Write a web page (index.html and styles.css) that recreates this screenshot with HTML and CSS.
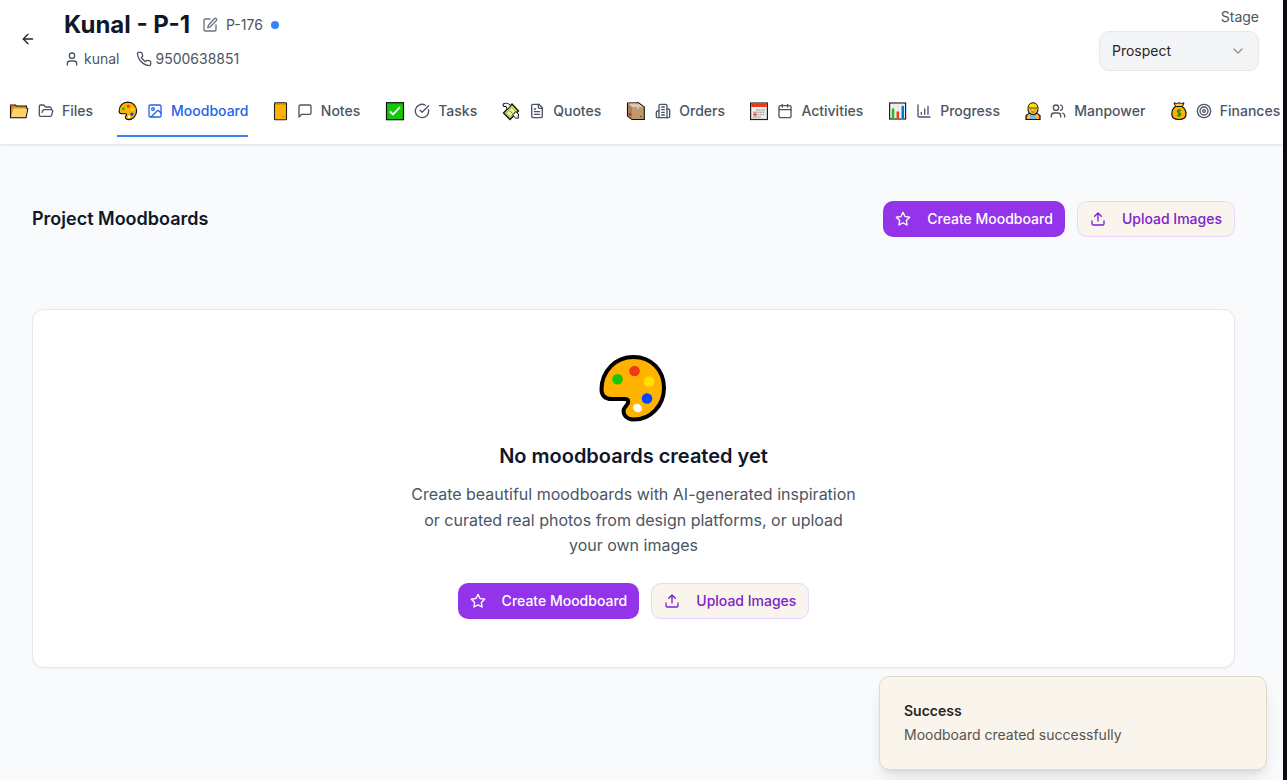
FILE: index.html
```html
<!DOCTYPE html>
<html lang="en">
<head>
<meta charset="utf-8">
<title>Kunal - P-1</title>
<link rel="stylesheet" href="styles.css">
</head>
<body>
<div class="app">
  <header class="header">
    <div class="topbar">
      <svg class="icon back" viewBox="0 0 24 24"><path d="m12 19-7-7 7-7"/><path d="M19 12H5"/></svg>
      <div class="project">
        <div class="title-row">
          <h1>Kunal - P-1</h1>
          <svg class="icon edit" viewBox="0 0 24 24"><path d="M12 3H5a2 2 0 0 0-2 2v14a2 2 0 0 0 2 2h14a2 2 0 0 0 2-2v-7"/><path d="M18.4 2.6a2.1 2.1 0 0 1 3 3L12.4 14.6a2 2 0 0 1-.9.5l-2.9.8.8-2.9a2 2 0 0 1 .5-.9Z"/></svg>
          <span class="code">P-176</span>
          <span class="dot"></span>
        </div>
        <div class="contact">
          <svg class="icon" viewBox="0 0 24 24"><path d="M19 21v-2a4 4 0 0 0-4-4H9a4 4 0 0 0-4 4v2"/><circle cx="12" cy="7" r="4"/></svg>
          <span class="person">kunal</span>
          <svg class="icon" viewBox="0 0 24 24"><path d="M22 16.92v3a2 2 0 0 1-2.18 2 19.79 19.79 0 0 1-8.63-3.07 19.5 19.5 0 0 1-6-6A19.79 19.79 0 0 1 2.12 4.18 2 2 0 0 1 4.11 2h3a2 2 0 0 1 2 1.72c.13.96.36 1.9.7 2.81a2 2 0 0 1-.45 2.11L8.09 9.91a16 16 0 0 0 6 6l1.27-1.27a2 2 0 0 1 2.11-.45c.91.34 1.85.57 2.81.7A2 2 0 0 1 22 16.92z"/></svg>
          <span class="phone">9500638851</span>
        </div>
      </div>
      <div class="stage">
        <span class="stage-label">Stage</span>
        <div class="select"><span>Prospect</span><svg class="icon chevron" viewBox="0 0 24 24"><path d="m6 9 6 6 6-6"/></svg></div>
      </div>
    </div>
    <nav class="tabs">
      <a class="tab tab-files">
        <span class="emoji"><svg width="20" height="20" viewBox="0 0 20 20"><path d="M1.500 4h5l1 1h10v2.500h1.300L17 16.700H1.500z" fill="#d89614" stroke="#111" stroke-width="1.100"/><path d="M4.500 7.500h13.800L16.500 16H2z" fill="#ffd36b"/><path d="M1.500 3.800h4v1.600h-4z" fill="#e5372a"/></svg></span>
        <svg class="icon" viewBox="0 0 24 24"><path d="m6 14 1.500-2.900A2 2 0 0 1 9.240 10H20a2 2 0 0 1 1.940 2.500l-1.540 6a2 2 0 0 1-1.950 1.500H4a2 2 0 0 1-2-2V5a2 2 0 0 1 2-2h3.900a2 2 0 0 1 1.690.9l.81 1.200a2 2 0 0 0 1.670.9H18a2 2 0 0 1 2 2v2"/></svg>
        <span class="name">Files</span>
      </a>
      <a class="tab tab-mood active">
        <span class="emoji"><svg width="20" height="20" viewBox="0 0 72 72"><path d="M35 4C17 4 4 18 4 37c0 7 4 9 10 9h13c5 0 5 4 2 7-6 6-1 14 8 14 17 0 30-14 30-32S53 4 35 4Z" fill="#ffb300" stroke="#111" stroke-width="4"/><circle cx="20" cy="28" r="5.500" fill="#16c60c"/><circle cx="37" cy="19" r="5.500" fill="#f03a17"/><circle cx="52" cy="30" r="5.500" fill="#ffe000"/><circle cx="50" cy="47" r="6" fill="#0046ff"/><circle cx="40" cy="57" r="4.500" fill="#fff"/></svg></span>
        <svg class="icon" viewBox="0 0 24 24"><rect x="3" y="3" width="18" height="18" rx="2"/><circle cx="9" cy="9" r="2"/><path d="m21 15-3.090-3.090a2 2 0 0 0-2.820 0L6 21"/></svg>
        <span class="name">Moodboard</span>
      </a>
      <a class="tab tab-notes">
        <span class="emoji"><svg width="17" height="20" viewBox="0 0 17 20"><rect x="2.500" y="1.700" width="12" height="17" rx=".7" fill="#ffb300" stroke="#222" stroke-width="1.100"/><path d="M3 3h11" stroke="#a97811" stroke-width="1.600" stroke-dasharray="1 1"/><path d="M10 15.500h3" stroke="#d38c05"/></svg></span>
        <svg class="icon" viewBox="0 0 24 24"><path d="M21 15a2 2 0 0 1-2 2H7l-4 4V5a2 2 0 0 1 2-2h14a2 2 0 0 1 2 2z"/></svg>
        <span class="name">Notes</span>
      </a>
      <a class="tab tab-tasks">
        <span class="emoji"><svg width="22" height="20" viewBox="0 0 22 20"><rect x="2.500" y="1.700" width="17" height="17" fill="#16c60c" stroke="#111" stroke-width="1.200"/><path d="m6 10.500 3 3 7-7.500" fill="none" stroke="#fff" stroke-width="1.800"/></svg></span>
        <svg class="icon" viewBox="0 0 24 24"><path d="M21.801 10A10 10 0 1 1 17 3.335"/><path d="m9 11 3 3L22 4"/></svg>
        <span class="name">Tasks</span>
      </a>
      <a class="tab tab-quotes">
        <span class="emoji"><svg width="20" height="20" viewBox="0 0 20 20"><path d="m2.500 12 8.500-9 6.500 7-8.500 8.500z" fill="#c9e34f" stroke="#111" stroke-width="1.300"/><path d="m5.200 12 5.500-5.700 4 4-5.500 5.500z" fill="#eaf6a4" stroke="#8ba336" stroke-width=".8"/><path d="M2 3C5 1.500 9 2.500 9.500 5L6.500 8.500 5 5.500 2.500 5.500ZM12 13.500l3-3 3 3.500-1 1 .5 2c-3 1-5-1-5.500-3.500Z" fill="#eee" stroke="#111"/><path d="m8.500 10 3 2" stroke="#768b2c"/></svg></span>
        <svg class="icon" viewBox="0 0 24 24"><path d="M15 2H6a2 2 0 0 0-2 2v16a2 2 0 0 0 2 2h12a2 2 0 0 0 2-2V7Z"/><path d="M14 2v4a2 2 0 0 0 2 2h4M10 9H8M16 13H8M16 17H8"/></svg>
        <span class="name">Quotes</span>
      </a>
      <a class="tab tab-orders">
        <span class="emoji"><svg width="22" height="20" viewBox="0 0 22 20"><path d="m2.500 2 11-.2 5.800 4.200v12.500H7L2.500 15Z" fill="#c19a6b" stroke="#111" stroke-width="1.100"/><path d="M3 2.500h10.500L18.500 6H7Z" fill="#e8c4a0"/><path d="M3 3 7 6.500v11.500l-4-3.200Z" fill="#a8805b"/><path d="m8.500 2.700 4.500 3v2" fill="none" stroke="#cccac5" stroke-width="1.800"/><path d="m4 12.500 2 1.500" stroke="#e81224" stroke-width="2"/><path d="m15 16 2-1" stroke="#5c422d"/></svg></span>
        <svg class="icon" viewBox="0 0 24 24"><path d="M6 22V4a2 2 0 0 1 2-2h8a2 2 0 0 1 2 2v18Z"/><path d="M6 12H4a2 2 0 0 0-2 2v6a2 2 0 0 0 2 2h2M18 9h2a2 2 0 0 1 2 2v9a2 2 0 0 1-2 2h-2M10 6h4M10 10h4M10 14h4M10 18h4"/></svg>
        <span class="name">Orders</span>
      </a>
      <a class="tab tab-activities">
        <span class="emoji"><svg width="20" height="20" viewBox="0 0 20 20"><rect x="1.600" y="2" width="16.800" height="16.500" fill="#f2f2f2" stroke="#222" stroke-width="1.200"/><path d="M2.200 2.500h15.600V6H2.200z" fill="#f03a17"/><path d="M7 9h9M4 11.300h12M4 13.600h12M4 15.900h8" stroke="#aaa" stroke-width="1.500" stroke-dasharray="1.800 .6"/><path d="M4 13.500h4M6 11.500v4" stroke="#f03a17"/></svg></span>
        <svg class="icon" viewBox="0 0 24 24"><path d="M8 2v4M16 2v4M3 10h18"/><rect x="3" y="4" width="18" height="18" rx="2"/></svg>
        <span class="name">Activities</span>
      </a>
      <a class="tab tab-progress">
        <span class="emoji"><svg width="20" height="20" viewBox="0 0 20 20"><rect x="1.600" y="2" width="16" height="16" fill="#f2f2f2" stroke="#222" stroke-width="1.200"/><path d="M6 2.600v14.800M10 2.600v14.800M14 2.600v14.800" stroke="#ddd"/><path d="M5 7.500v10" stroke="#16c60c" stroke-width="2.500"/><path d="M9.800 10.500v7" stroke="#f03a17" stroke-width="2.500"/><path d="M14.800 5v12.500" stroke="#0078d7" stroke-width="2.500"/></svg></span>
        <svg class="icon" viewBox="0 0 24 24"><path d="M3 3v16a2 2 0 0 0 2 2h16M8 17v-3M13 17V9M18 17V5"/></svg>
        <span class="name">Progress</span>
      </a>
      <a class="tab tab-manpower">
        <span class="emoji"><svg width="18" height="20" viewBox="0 0 18 20"><path d="M2 18.500v-4l3-2h8l3 2v4z" fill="#ff9d2e" stroke="#111" stroke-width="1.200"/><path d="M6 13h6v5H6z" fill="#79b9df"/><path d="M5 13v5M13 13v5" stroke="#f5df55"/><circle cx="9" cy="8.500" r="5" fill="#ffc83d" stroke="#111" stroke-width="1.100"/><path d="M4 7C4 0 14 0 14 7Z" fill="#ffe000" stroke="#111"/><path d="M3.500 7h11" stroke="#d5a800"/><path d="M6.500 9h1M10.500 9h1M7.500 11h3" stroke="#7b4b11"/></svg></span>
        <svg class="icon" viewBox="0 0 24 24"><path d="M16 21v-2a4 4 0 0 0-4-4H6a4 4 0 0 0-4 4v2M22 21v-2a4 4 0 0 0-3-3.870M16 3.130a4 4 0 0 1 0 7.750"/><circle cx="9" cy="7" r="4"/></svg>
        <span class="name">Manpower</span>
      </a>
      <a class="tab tab-finances">
        <span class="emoji"><svg width="18" height="20" viewBox="0 0 18 20"><path d="M5.500 5.500C2.500 7.500 1.800 10 1.800 13c0 4 2.500 5.500 7.200 5.500s7-1.500 7-5.500c0-3-1-5.500-4-7.500Z" fill="#ffb300" stroke="#111" stroke-width="1.200"/><path d="m4 1.800 2.500.7L9 1.800l2.500.7 2.500-.7-1.500 3.700h-7z" fill="#ffc83d" stroke="#111"/><path d="M11 9.500c-3-1.500-5 1-2 2.200s1.500 3.800-2 2.300M9 8v8" fill="none" stroke="#138a0e" stroke-width="1.200"/></svg></span>
        <svg class="icon" viewBox="0 0 24 24"><circle cx="12" cy="12" r="10"/><circle cx="12" cy="12" r="6"/><circle cx="12" cy="12" r="2"/></svg>
        <span class="name">Finances</span>
      </a>
    </nav>
  </header>
  <main class="content">
    <div class="section-head">
      <h2>Project Moodboards</h2>
      <div class="actions">
        <button class="btn primary"><svg class="icon" viewBox="0 0 24 24"><path d="m12 2 3.090 6.260L22 9.270l-5 4.870 1.180 6.880L12 17.770l-6.180 3.250L7 14.140 2 9.270l6.910-1.010Z"/></svg>Create Moodboard</button>
        <button class="btn secondary"><svg class="icon" viewBox="0 0 24 24"><path d="M21 15v4a2 2 0 0 1-2 2H5a2 2 0 0 1-2-2v-4M17 8l-5-5-5 5M12 3v12"/></svg>Upload Images</button>
      </div>
    </div>
    <section class="card">
      <svg class="palette" viewBox="0 0 72 72"><path d="M35.500 4C17.500 4 3.500 18 3.500 36.500c0 6.500 4 9.500 10 9.500h13c5 0 4.500 4 1.500 7-5.500 6-1 13.500 8 13.500 16.500 0 30-14 30-31.500S53.500 4 35.500 4Z" fill="#ffb300" stroke="#000" stroke-width="4"/><circle cx="19.500" cy="26.300" r="5.300" fill="#16c60c"/><circle cx="36.500" cy="18" r="5.300" fill="#f03a17"/><circle cx="51" cy="28.500" r="5.300" fill="#ffe000"/><circle cx="49" cy="45.500" r="5.300" fill="#0046ff"/><ellipse cx="39.500" cy="55" rx="4.800" ry="4" transform="rotate(40 39.500 55)" fill="#fff"/></svg>
      <h3>No moodboards created yet</h3>
      <p>Create beautiful moodboards with AI-generated inspiration or curated real photos from design platforms, or upload your own images</p>
      <div class="actions">
        <button class="btn primary"><svg class="icon" viewBox="0 0 24 24"><path d="m12 2 3.090 6.260L22 9.270l-5 4.870 1.180 6.880L12 17.770l-6.180 3.250L7 14.140 2 9.270l6.910-1.010Z"/></svg>Create Moodboard</button>
        <button class="btn secondary"><svg class="icon" viewBox="0 0 24 24"><path d="M21 15v4a2 2 0 0 1-2 2H5a2 2 0 0 1-2-2v-4M17 8l-5-5-5 5M12 3v12"/></svg>Upload Images</button>
      </div>
    </section>
  </main>
  <div class="toast"><strong>Success</strong><span>Moodboard created successfully</span></div>
</div>
</body>
</html>
```
FILE: styles.css
```css
* { box-sizing: border-box; }
body { margin: 0; font-family: Inter, "Liberation Sans", sans-serif; font-size: 14px; line-height: 20px; color: #0f172a; }
h1, h2, h3, p { margin: 0; }
.app { height: 780px; overflow: hidden; background: #f8fafc; border-right: 4px solid #0a0a14; }
.icon { width: 16px; height: 16px; flex: none; fill: none; stroke: currentColor; stroke-width: 2; stroke-linecap: round; stroke-linejoin: round; }
.header { height: 144.5px; background: #fff; border-bottom: 1px solid #e5e7eb; box-shadow: 0 1px 2px rgba(0,0,0,.05); }
.topbar { display: flex; height: 85px; padding: 8px 24px 0 20px; }
.back { margin: 23px 28px 0 0; color: #292524; }
.project { flex: 1; }
.title-row { display: flex; align-items: center; height: 33px; }
h1 { font-size: 24px; line-height: 32px; font-weight: 700; }
.edit { margin-left: 12px; color: #6b7280; }
.code { margin-left: 8px; color: #4b5563; }
.dot { width: 8px; height: 8px; margin-left: 8px; border-radius: 50%; background: #3b82f6; }
.contact { display: flex; align-items: center; height: 20px; margin-top: 8px; color: #4b5563; }
.person { margin: 0 16px 0 4px; }
.phone { margin-left: 4px; }
.stage { display: flex; flex-direction: column; align-items: flex-end; margin-top: -1px; color: #4b5563; }
.select { display: flex; align-items: center; justify-content: space-between; width: 160px; height: 40px; margin-top: 4px; padding: 0 12px; border: 1px solid #e5e7eb; border-radius: 10px; background: #f3f4f6; color: #292524; }
.chevron { color: #949494; }
.tabs { display: flex; height: 52px; gap: 24px; padding-left: 8px; overflow: hidden; }
.tab { display: flex; align-items: center; gap: 8px; flex: none; height: 52px; padding-top: 2px; border-bottom: 2px solid transparent; color: #4b5563; font-weight: 500; }
.tab.active { color: #2563eb; border-color: #3b82f6; }
.emoji { display: flex; justify-content: center; width: 22px; height: 20px; }
.emoji svg { flex: none; }
.tab-notes .emoji { width: 16.4px; }
.tab-quotes .emoji { width: 20px; }
.tab-activities .emoji { width: 20.4px; }
.tab-progress .emoji { width: 21px; }
.tab-manpower .emoji { width: 18.4px; }
.tab-finances .emoji { width: 18.4px; }
.content { padding: 56.5px 48px 0 32px; }
.section-head { display: flex; align-items: center; justify-content: space-between; height: 36px; }
h2 { font-size: 18px; line-height: 28px; font-weight: 600; }
.actions { display: flex; gap: 12px; }
.btn { display: flex; align-items: center; height: 36px; padding: 0 12px; border: 0; border-radius: 10px; font: 500 14px/20px Inter, sans-serif; }
.btn .icon { margin-right: 16px; }
.primary { color: #fff; background: #9333ea; }
.secondary { color: #7e22ce; background: #f9f4ec; border: 1px solid #e9d5ff; }
.card { display: flex; flex-direction: column; align-items: center; height: 359px; margin-top: 72px; padding-top: 43px; border: 1px solid #e5e7eb; border-radius: 12px; background: #fff; box-shadow: 0 1px 2px rgba(0,0,0,.05); }
.palette { width: 72px; height: 72px; flex: none; }
h3 { margin-top: 17px; font-size: 20px; line-height: 28px; font-weight: 600; }
.card p { width: 448px; margin: 12px 0 24.2px; color: #4b5563; font-size: 16px; line-height: 25.6px; text-align: center; }
.toast { position: absolute; left: 879px; top: 676px; display: flex; flex-direction: column; gap: 4px; width: 388px; height: 94px; padding: 24px; border: 1px solid #e3d9c9; border-radius: 10px; background: #f9f4ec; color: #292524; box-shadow: 0 10px 15px -3px rgba(0,0,0,.1), 0 4px 6px -4px rgba(0,0,0,.1); }
.toast strong { font-weight: 600; }
.toast span { color: #57534e; }
```
